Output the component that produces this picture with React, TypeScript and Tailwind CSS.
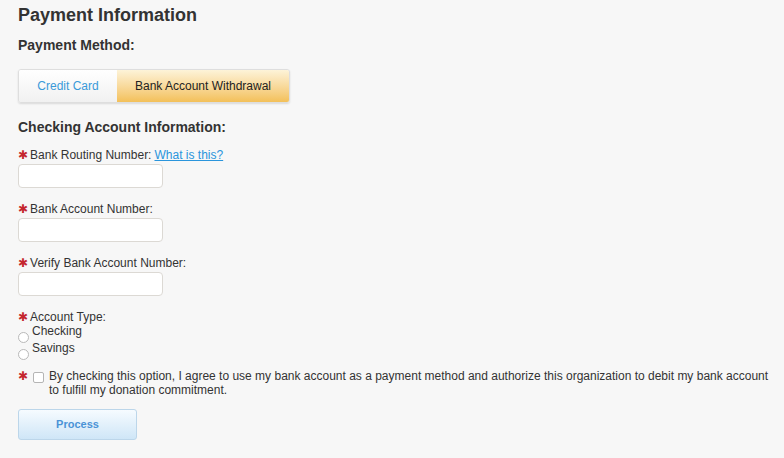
import React, { useState } from "react";

const Star = () => (
  <span className="text-[#c4262e] text-[12px] leading-none mr-[2px] font-['DejaVu_Sans',sans-serif]">
    ✱
  </span>
);

const Field = ({ label, extra, top }: { label: string; extra?: React.ReactNode; top: string }) => (
  <div className={top}>
    <div className="flex items-center h-[14px] text-[12px] text-[#333]">
      <Star />
      <span>{label}</span>
      {extra}
    </div>
    <input
      type="text"
      className="mt-[2px] block w-[145px] h-[24px] bg-white border border-[#dcd9d4] rounded-[4px] outline-none"
    />
  </div>
);

const Radio = ({ label, checked, onClick }: { label: string; checked: boolean; onClick: () => void }) => (
  <div className="flex items-start h-[17px] cursor-pointer" onClick={onClick}>
    <div className="mt-[8px] w-[11px] h-[11px] rounded-full border border-[#b9b9b9] bg-white flex items-center justify-center">
      {checked && <div className="w-[5px] h-[5px] rounded-full bg-[#333]" />}
    </div>
    <span className="ml-[3px] text-[12px] leading-[14px] text-[#333]">{label}</span>
  </div>
);

export default function App() {
  const [method, setMethod] = useState("bank");
  const [type, setType] = useState("");
  const [agree, setAgree] = useState(false);

  return (
    <div className="min-h-[458px] w-full bg-[#f7f7f7] pl-[18px] pt-[4px] font-['Liberation_Sans',Arial,sans-serif] text-[#333]">
      <h1 className="text-[18px] leading-[22px] font-bold text-[#333]">Payment Information</h1>
      <div className="mt-[11px] text-[14px] leading-[16px] font-bold">Payment Method:</div>

      <div className="mt-[16px] flex w-[272px] h-[34px] border border-[#dedede] rounded-[3px] overflow-hidden shadow-[0_1px_2px_rgba(0,0,0,0.12)]">
        <button
          onClick={() => setMethod("card")}
          className={
            method === "card"
              ? "w-[98px] h-full text-[12px] text-[#222] bg-gradient-to-b from-[#fdf3d8] to-[#f3c058]"
              : "w-[98px] h-full text-[12px] text-[#3a9ad9] bg-gradient-to-b from-[#ffffff] to-[#f1f1f1]"
          }
        >
          Credit Card
        </button>
        <button
          onClick={() => setMethod("bank")}
          className={
            method === "bank"
              ? "flex-1 h-full text-[12px] text-[#222] bg-gradient-to-b from-[#fdf3d8] to-[#f3c058]"
              : "flex-1 h-full text-[12px] text-[#3a9ad9] bg-gradient-to-b from-[#ffffff] to-[#f1f1f1]"
          }
        >
          Bank Account Withdrawal
        </button>
      </div>

      <div className="mt-[16px] text-[14px] leading-[16px] font-bold">Checking Account Information:</div>

      <Field
        top="mt-[13px]"
        label="Bank Routing Number:"
        extra={
          <a href="#" className="ml-[3px] text-[#2a95dc] underline">
            What is this?
          </a>
        }
      />
      <Field top="mt-[14px]" label="Bank Account Number:" />
      <Field top="mt-[14px]" label="Verify Bank Account Number:" />

      <div className="mt-[14px] flex items-center h-[14px] text-[12px]">
        <Star />
        <span>Account Type:</span>
      </div>
      <Radio label="Checking" checked={type === "checking"} onClick={() => setType("checking")} />
      <Radio label="Savings" checked={type === "savings"} onClick={() => setType("savings")} />

      <div className="mt-[11px] flex items-start">
        <div className="w-[15px] h-[14px] flex items-center">
          <Star />
        </div>
        <div
          onClick={() => setAgree(!agree)}
          className="mt-[3px] w-[11px] h-[11px] rounded-[2px] border border-[#b5b5b5] bg-white flex items-center justify-center text-[9px] leading-none cursor-pointer"
        >
          {agree ? "✓" : ""}
        </div>
        <p className="ml-[5px] w-[728px] text-[12px] leading-[14px] text-[#333]">
          By checking this option, I agree to use my bank account as a payment method and authorize this
          organization to debit my bank account to fulfill my donation commitment.
        </p>
      </div>

      <button className="mt-[12px] w-[119px] h-[31px] rounded-[3px] border border-[#bcd6ea] bg-gradient-to-b from-[#f6fbff] to-[#cfe6f7] text-[11px] font-bold text-[#4a93d6]">
        Process
      </button>
    </div>
  );
}
